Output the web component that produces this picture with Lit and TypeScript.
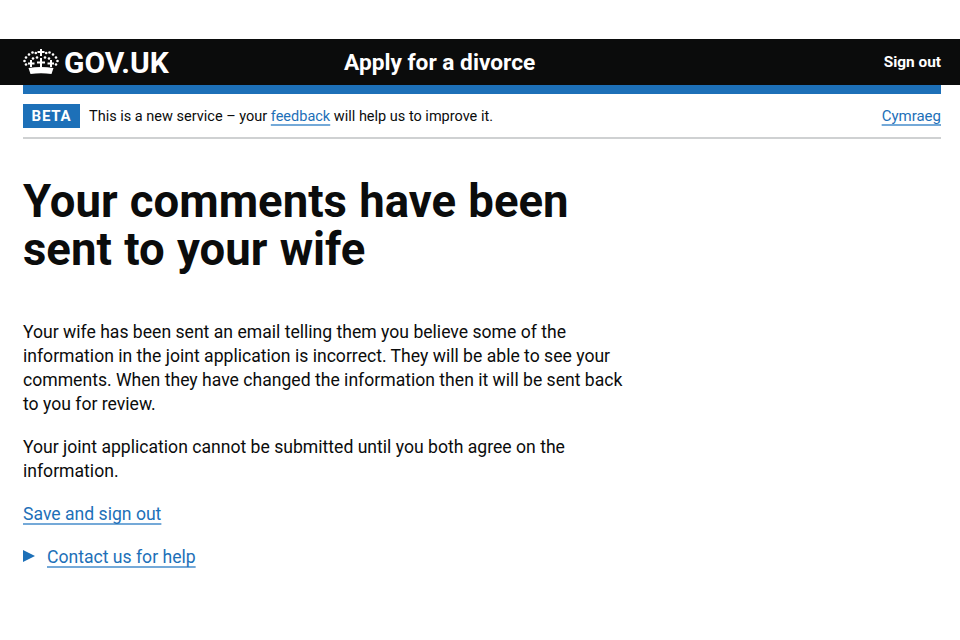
import { LitElement, html, css } from "lit";
import { customElement } from "lit/decorators.js";

@customElement("app-root")
export class AppRoot extends LitElement {
  static styles = css`
    :host { display: block; height: 640px; background: #fff; color: #0b0c0c; font-family: Roboto, "Liberation Sans", sans-serif; overflow: hidden; }
    a { color: #1d70b8; text-underline-offset: 3px; text-decoration-thickness: 2px; text-decoration-color: #74a9d8; text-decoration-skip-ink: none; }
    .top { height: 39px; }
    .bar { height: 46px; background: #0b0c0c; color: #fff; padding: 0 19px 0 23px; display: flex; align-items: center; box-sizing: border-box; }
    .logo { display: flex; align-items: center; gap: 5px; width: 321px; flex: none; font-weight: 700; font-size: 30px; }
    .logo svg { display: block; }
    .service { flex: 1; font-weight: 700; font-size: 22.7px; }
    .signout { font-weight: 700; font-size: 15.4px; }
    .wrap { margin: 0 19px 0 23px; }
    .rule { height: 9px; background: #1d70b8; }
    .phase { height: 42px; padding-top: 1px; display: flex; align-items: center; border-bottom: 2px solid #cfd1d2; font-size: 14.5px; }
    .tag { background: #1d70b8; color: #fff; font-weight: 700; font-size: 15px; letter-spacing: 0.8px; width: 57px; height: 24px; display: flex; align-items: center; justify-content: center; margin-right: 9px; box-sizing: border-box; }
    .msg { flex: 1; }
    .lang { font-size: 15px; }
    main { padding-top: 39px; width: 610px; }
    h1 { margin: 0 0 46px; font-size: 45.5px; line-height: 48px; font-weight: 700; word-spacing: 1px; }
    p { margin: 0 0 19px; font-size: 17.6px; line-height: 24px; }
    .details { display: flex; align-items: center; gap: 12px; font-size: 17.6px; line-height: 24px; }
    .tri { width: 0; height: 0; margin-top: -2px; border-style: solid; border-width: 6.500px 0 6.500px 12px; border-color: transparent transparent transparent #1d70b8; }
  `;

  render() {
    return html`
      <div class="top"></div>
      <div class="bar">
        <div class="logo">
          <svg width="36" height="28" viewBox="0 0 36 28" fill="#fff" aria-hidden="true">
            <path d="M17 1h2v2h2.500v2H19v3h-2V5h-2.500V3H17z"/>
            <circle cx="9.500" cy="4.500" r="1.300"/><circle cx="12.800" cy="5" r="1.300"/><circle cx="23.200" cy="5" r="1.300"/><circle cx="26.500" cy="4.500" r="1.300"/>
            <circle cx="6" cy="6.500" r="1.300"/><circle cx="30" cy="6.500" r="1.300"/>
            <circle cx="3" cy="9.500" r="1.300"/><circle cx="33" cy="9.500" r="1.300"/>
            <circle cx="1.500" cy="13" r="1.300"/><circle cx="34.500" cy="13" r="1.300"/>
            <circle cx="3" cy="16.500" r="1.300"/><circle cx="33" cy="16.500" r="1.300"/>
            <circle cx="10" cy="10.500" r="1.300"/><circle cx="14" cy="9.500" r="1.300"/><circle cx="22" cy="9.500" r="1.300"/><circle cx="26" cy="10.500" r="1.300"/>
            <path d="M7 12h2v2.500h2.500v2H9v2.500H7v-2.500H5v-2h2zM17 10h2v3.500h3v2h-3v3.500h-2v-3.500h-3v-2h3zM27 12h2v2.500h2v2h-2v2.500h-2v-2.500h-2.500v-2H27z"/>
            <path d="M5.500 20c8-1.300 17-1.300 25 0L28.500 26c-7-1-14-1-21 0z"/>
          </svg>
          <span>GOV.UK</span>
        </div>
        <div class="service">Apply for a divorce</div>
        <div class="signout">Sign out</div>
      </div>
      <div class="wrap">
        <div class="rule"></div>
        <div class="phase">
          <span class="tag">BETA</span>
          <span class="msg">This is a new service – your <a href="#">feedback</a> will help us to improve it.</span>
          <a class="lang" href="#">Cymraeg</a>
        </div>
        <main>
          <h1>Your comments have been sent to your wife</h1>
          <p>Your wife has been sent an email telling them you believe some of the information in the joint application is incorrect. They will be able to see your comments. When they have changed the information then it will be sent back to you for review.</p>
          <p>Your joint application cannot be submitted until you both agree on the information.</p>
          <p><a href="#">Save and sign out</a></p>
          <div class="details"><span class="tri"></span><a href="#">Contact us for help</a></div>
        </main>
      </div>
    `;
  }
}
